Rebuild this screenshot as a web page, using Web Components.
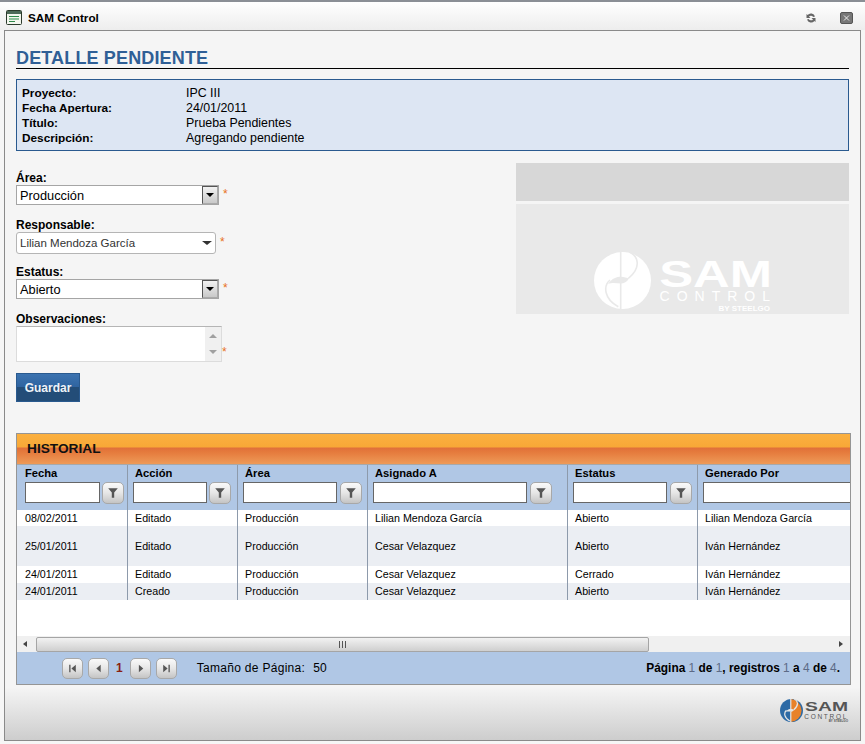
<!DOCTYPE html>
<html>
<head>
<meta charset="utf-8">
<title>SAM Control</title>
<style>
  html, body { margin: 0; padding: 0; background: #f5f5f5; }
  body { font-family: "Liberation Sans", Arial, sans-serif; font-size: 12px; color: #000; }
</style>
</head>
<body>
<sam-window>
  <sam-detail>
    <sam-title>DETALLE PENDIENTE</sam-title>
    <sam-info></sam-info>
    <div style="display:flex;justify-content:space-between;margin-top:12px">
      <sam-form></sam-form>
      <sam-banner></sam-banner>
    </div>
    <sam-grid></sam-grid>
  </sam-detail>
</sam-window>

<script>
// Logo mark shared by the banner and the footer (viewBox is 57x57)
function logoMark(left, right, cut, sw) {
  return `
    <circle cx="28.5" cy="28.5" r="28.5" fill="${left}"/>
    <path d="M26.700 .06A28.500 28.500 0 0 1 26.700 56.940Z" fill="${right}"/>
    <path d="M14 32C18 26 23 24.700 27 24.700C30 24.700 33 26 35 26.500C33 30 30 31.500 27 31.500C23 31.500 19 30 14 32Z" fill="${cut}"/>
    <path d="M26.700 0V25M26.700 31V57M35.300 0C44 4 48 15 34.300 26.500M16 28C9 34 10 47 24.300 54.700" fill="none" stroke="${cut}" stroke-width="${sw}"/>`;
}

class SamWindow extends HTMLElement {
  constructor() {
    super();
    this.attachShadow({mode: "open"});
    this.shadowRoot.innerHTML = `
      <style>
        :host { display: block; width: 865px; height: 744px; box-sizing: border-box; background: #f6f6f6; border-top: 2px solid #8b8f96; overflow: hidden; }
        #bar { height: 28px; box-sizing: border-box; display: flex; align-items: center; padding: 3px 12px 0 6px; background: linear-gradient(#ffffff, #ededed); }
        #name { font-weight: bold; font-size: 11.700px; margin-left: 6px; flex: 1; }
        #refresh { margin-right: 23px; }
        #frame { margin-left: 4px; width: 857px; height: 711px; box-sizing: border-box; border: 1px solid #8a8a8a; background: #f5f5f5; display: flex; flex-direction: column; }
        #body { flex: 1; min-height: 0; }
        #foot { height: 55px; flex: none; display: flex; justify-content: flex-end; padding: 14px 12px 0 0; box-sizing: border-box; background: linear-gradient(#f5f5f5 4%, #cdcdcd); }
      </style>
      <div id="bar">
        <svg width="16" height="15" viewBox="0 0 16 15">
          <rect x=".5" y=".5" width="15" height="14" rx="1" fill="#f3f6ee" stroke="#2c3a2c"/>
          <rect x="1" y="1" width="14" height="3" fill="#4d6a58"/>
          <path d="M3 6.500h10M3 9h10M3 11.500h6" stroke="#2f8a4a" fill="none"/>
        </svg>
        <span id="name">SAM Control</span>
        <svg id="refresh" width="12" height="12" viewBox="0 0 12 12">
          <path d="M10 4.500A4.300 4.300 0 0 0 2.600 3L1.500 2v4h4L4 4.600A2.600 2.600 0 0 1 8.300 5Z" fill="#666"/>
          <path d="M2 7.500A4.300 4.300 0 0 0 9.400 9l1.100 1V6h-4L8 7.400A2.600 2.600 0 0 1 3.700 7Z" fill="#666"/>
        </svg>
        <svg width="13" height="12" viewBox="0 0 13 12">
          <rect x=".5" y=".5" width="12" height="11" rx="1.500" fill="#777" stroke="#555"/>
          <path d="M4 3.500l5 5M9 3.500l-5 5" stroke="#eee" fill="none"/>
        </svg>
      </div>
      <div id="frame">
        <div id="body"><slot></slot></div>
        <div id="foot"><sam-logo small></sam-logo></div>
      </div>`;
  }
}

class SamDetail extends HTMLElement {
  constructor() {
    super();
    this.attachShadow({mode: "open"});
    this.shadowRoot.innerHTML = `
      <style>:host { display: block; padding: 17px 11px 0 11px; }</style>
      <slot></slot>`;
  }
}

class SamTitle extends HTMLElement {
  constructor() {
    super();
    this.attachShadow({mode: "open"});
    this.shadowRoot.innerHTML = `
      <style>
        :host { display: block; height: 20px; border-bottom: 1px solid #000; font: bold 18px/20px "Liberation Sans", Arial, sans-serif; color: #2f5f96; letter-spacing: .15px; }
      </style>
      <slot></slot>`;
  }
}

class SamInfo extends HTMLElement {
  constructor() {
    super();
    this.attachShadow({mode: "open"});
    var rows = [
      ["Proyecto:", "IPC III"],
      ["Fecha Apertura:", "24/01/2011"],
      ["Título:", "Prueba Pendientes"],
      ["Descripción:", "Agregando pendiente"]
    ];
    this.shadowRoot.innerHTML = `
      <style>
        :host { display: grid; grid-template-columns: 164px 1fr; grid-auto-rows: 15px; margin-top: 10px; height: 72px; box-sizing: border-box; padding: 6px 5px 4px; border: 1px solid #2a5a8f; background: #dde6f3; font-size: 12.400px; line-height: 15px; }
        b { font-weight: bold; font-size: 11.800px; }
      </style>
      ${rows.map(r => `<b>${r[0]}</b><span>${r[1]}</span>`).join("")}`;
  }
}

class SamField extends HTMLElement {
  constructor() {
    super();
    this.attachShadow({mode: "open"});
    this.shadowRoot.innerHTML = `
      <style>
        :host { display: block; }
        label { display: block; font-weight: bold; font-size: 12px; line-height: 14px; height: 14px; }
        #row { display: flex; align-items: center; }
        #star { color: #e8701a; font-size: 12px; margin-left: 4px; margin-bottom: 2px; line-height: 12px; }
        :host([low]) #star { margin-left: 0; align-self: flex-end; margin-bottom: 4px; }
      </style>
      <label>${this.getAttribute("label")}</label>
      <div id="row"><slot></slot><span id="star">*</span></div>`;
  }
}

class SamSelect extends HTMLElement {
  constructor() {
    super();
    this.attachShadow({mode: "open"});
    this.shadowRoot.innerHTML = `
      <style>
        :host { display: flex; width: 203px; height: 20px; box-sizing: border-box; border: 1px solid #a5a5a5; background: #fff; font-size: 12.800px; align-items: center; }
        span { flex: 1; padding-left: 3px; }
        i { width: 16px; height: 18px; box-sizing: border-box; border: 1px solid #555; border-right-color: #aaa; border-bottom-color: #aaa; background: linear-gradient(#f2f2f2, #c9c9c9); display: flex; align-items: center; justify-content: center; }
        i:after { content: ""; border: 4px solid transparent; border-top: 4px solid #000; border-bottom: 0; }
      </style>
      <span><slot></slot></span><i></i>`;
  }
}

class SamCombo extends HTMLElement {
  constructor() {
    super();
    this.attachShadow({mode: "open"});
    this.shadowRoot.innerHTML = `
      <style>
        :host { display: flex; width: 200px; height: 22px; box-sizing: border-box; border: 1px solid #b5b5b5; border-radius: 3px; background: #fff; font-size: 11.500px; align-items: center; color: #333; }
        span { flex: 1; padding-left: 3px; }
        i { width: 0; border: 4px solid transparent; border-width: 4px 5px 0; border-top-color: #333; margin-right: 3px; }
      </style>
      <span><slot></slot></span><i></i>`;
  }
}

class SamTextarea extends HTMLElement {
  constructor() {
    super();
    this.attachShadow({mode: "open"});
    this.shadowRoot.innerHTML = `
      <style>
        :host { display: flex; width: 206px; height: 36px; box-sizing: border-box; border: 1px solid #dcdcdc; border-top-color: #b5b5b5; background: #fff; }
        #track { margin-left: auto; width: 16px; background: #f0f0f0; display: flex; flex-direction: column; justify-content: space-between; align-items: center; padding: 7px 0; box-sizing: border-box; }
        i { border: 4px solid transparent; border-width: 0 4px 4px; border-bottom-color: #a0a0a0; }
        i.d { border-width: 4px 4px 0; border-top-color: #a0a0a0; }
      </style>
      <div id="track"><i></i><i class="d"></i></div>`;
  }
}

class SamForm extends HTMLElement {
  constructor() {
    super();
    this.attachShadow({mode: "open"});
    this.shadowRoot.innerHTML = `
      <style>
        :host { display: flex; flex-direction: column; align-items: flex-start; padding-top: 8px; }
        button { margin-top: 11px; width: 64px; height: 29px; border: 1px solid #2a5a8f; padding: 0; color: #eef3f8; font: bold 12px "Liberation Sans", Arial, sans-serif; background: linear-gradient(#3c73b0, #2f64a0 47%, #234d78 48%, #234d78); }
      </style>
      <sam-field label="Área:"><sam-select>Producción</sam-select></sam-field>
      <sam-field label="Responsable:" style="margin-top:13px"><sam-combo>Lilian Mendoza García</sam-combo></sam-field>
      <sam-field label="Estatus:" style="margin-top:11px"><sam-select>Abierto</sam-select></sam-field>
      <sam-field label="Observaciones:" low style="margin-top:13px"><sam-textarea></sam-textarea></sam-field>
      <button>Guardar</button>`;
  }
}

class SamLogo extends HTMLElement {
  constructor() {
    super();
    this.attachShadow({mode: "open"});
    var small = this.hasAttribute("small");
    var c = small
      ? {l: "#2d6aa5", r: "#e8822a", cut: "#e6e6e6", text: "#555", sw: 3}
      : {l: "#fff", r: "#fff", cut: "#e9e9e9", text: "#fff", sw: 1.6};
    this.shadowRoot.innerHTML = `
      <style>
        :host { display: flex; align-items: flex-start; }
        svg { flex: none; }
        #text { display: flex; flex-direction: column; align-items: flex-end; font-family: "Liberation Sans", Arial, sans-serif; color: ${c.text}; margin-left: ${small ? 2 : 8}px; padding-top: ${small ? 3 : 10}px; width: ${small ? 43 : 111}px; white-space: nowrap; }
        #sam { font-weight: bold; font-size: ${small ? 13.5 : 36}px; line-height: ${small ? 10 : 26}px; transform: scaleX(${small ? 1.43 : 1.41}); transform-origin: right; margin-right: ${small ? 0 : -2}px; }
        #control { font-size: ${small ? 6.5 : 14}px; line-height: ${small ? 6 : 14}px; letter-spacing: ${small ? 1.7 : 7}px; margin-top: ${small ? 2 : 1}px; margin-right: ${small ? 0 : -7}px; }
        #by { font-weight: bold; font-size: ${small ? 3 : 8}px; line-height: ${small ? 3 : 8}px; margin-top: ${small ? 0 : 2}px; }
      </style>
      <svg width="${small ? 23 : 57}" height="${small ? 23 : 57}" viewBox="0 0 57 57">${logoMark(c.l, c.r, c.cut, c.sw)}</svg>
      <div id="text"><div id="sam">SAM</div><div id="control">CONTROL</div><div id="by">BY STEELGO</div></div>`;
  }
}

class SamBanner extends HTMLElement {
  constructor() {
    super();
    this.attachShadow({mode: "open"});
    this.shadowRoot.innerHTML = `
      <style>
        :host { display: block; width: 333px; }
        #top { height: 38px; background: #d7d7d7; }
        #main { margin-top: 3px; height: 110px; background: #e9e9e9; box-sizing: border-box; padding: 48px 0 0 78px; overflow: hidden; }
      </style>
      <div id="top"></div>
      <div id="main"><sam-logo></sam-logo></div>`;
  }
}

class SamIconButton extends HTMLElement {
  constructor() {
    super();
    this.attachShadow({mode: "open"});
    var icons = {
      filter: `<path d="M1 1h8L6 4.500V9H4V4.500Z" fill="#555"/>`,
      first: `<path d="M2 1.500h1.200v7H2ZM8 1.500v7L4 5Z" fill="#555"/>`,
      prev: `<path d="M7 1.500v7L3 5Z" fill="#555"/>`,
      next: `<path d="M3.500 1.500v7l4-3.500Z" fill="#555"/>`,
      last: `<path d="M2 1.500v7L6 5ZM6.800 1.500H8v7H6.800Z" fill="#555"/>`
    };
    var size = this.getAttribute("icon") == "filter" ? 12 : 11;
    this.shadowRoot.innerHTML = `
      <style>
        :host { display: flex; width: 21px; height: 21px; box-sizing: border-box; border: 1px solid #a8a8a8; border-radius: 5px; background: linear-gradient(#fafafa, #e6e6e6 50%, #c4c4c4); align-items: center; justify-content: center; flex: none; }
        :host([icon=filter]) { width: 22px; height: 22px; }
      </style>
      <svg width="${size}" height="${size}" viewBox="0 0 10 10">${icons[this.getAttribute("icon")]}</svg>`;
  }
}

class SamGrid extends HTMLElement {
  constructor() {
    super();
    this.attachShadow({mode: "open"});
    var cols = [
      {name: "Fecha", w: 111, input: 75, gap: 2},
      {name: "Acción", w: 110, input: 74, gap: 2},
      {name: "Área", w: 130, input: 94, gap: 3},
      {name: "Asignado A", w: 200, input: 154, gap: 3},
      {name: "Estatus", w: 130, input: 94, gap: 3},
      {name: "Generado Por", w: 200, input: 200, nofilter: true}
    ];
    var rows = [
      {h: 16, c: ["08/02/2011", "Editado", "Producción", "Lilian Mendoza García", "Abierto", "Lilian Mendoza García"]},
      {h: 40, alt: true, c: ["25/01/2011", "Editado", "Producción", "Cesar Velazquez", "Abierto", "Iván Hernández"]},
      {h: 17, up: true, c: ["24/01/2011", "Editado", "Producción", "Cesar Velazquez", "Cerrado", "Iván Hernández"]},
      {h: 17, up: true, alt: true, c: ["24/01/2011", "Creado", "Producción", "Cesar Velazquez", "Abierto", "Iván Hernández"]}
    ];
    var template = cols.map(c => c.w + "px").join(" ");
    this.shadowRoot.innerHTML = `
      <style>
        :host { margin-top: 31px; width: 835px; height: 252px; box-sizing: border-box; border: 1px solid #959595; font-size: 10.700px; display: flex; flex-direction: column; }
        #head { height: 31px; flex: none; box-sizing: border-box; padding: 7px 0 0 10px; border-bottom: 1px solid #a8a8a8; font: bold 13.700px/15px "Liberation Sans", Arial, sans-serif; color: #111; background: linear-gradient(#fbb040, #f8a837 44%, #e0703a 46%, #e57a3c 60%, #ee9a58); }
        #scroll { flex: 1; min-height: 0; overflow: hidden; background: #fff; }
        .row { display: grid; grid-template-columns: ${template}; width: 881px; }
        #cols { background: #b0c7e5; height: 45px; font-weight: bold; font-size: 11.200px; }
        #cols > div { border-right: 1px solid #8d9aab; padding: 2px 0 0 7px; box-sizing: border-box; overflow: hidden; }
        #cols > div:first-child { padding-left: 8px; }
        #cols .f { display: flex; align-items: flex-start; margin: 3px 0 0 -2px; }
        #cols > div:first-child .f { margin-left: 0; }
        #cols input { height: 21px; padding: 0; box-sizing: border-box; border: 1px solid #666; background: #fff; flex: none; margin: 0; }
        .body > div { border-right: 1px solid #8d9aab; padding-left: 7px; box-sizing: border-box; display: flex; align-items: center; }
        .body > div:first-child { padding-left: 8px; }
        .up > div { padding-bottom: 2px; }
        .alt { background: #ebeef3; }
        #bar { height: 16px; flex: none; display: flex; align-items: center; background: #f0f0f0; }
        #bar i { width: 0; border: 3px solid transparent; margin: 0 5px 0 0; }
        #thumb { width: 613px; height: 15px; box-sizing: border-box; border: 1px solid #a5a5a5; border-radius: 2px; background: linear-gradient(#f2f2f2, #cfcfcf); display: flex; align-items: center; justify-content: center; }
        #pager { height: 32px; flex: none; box-sizing: border-box; background: #b0c7e5; display: flex; align-items: center; padding: 0 10px 0 45px; gap: 5px; font-size: 12px; }
        #cur { color: #8a1f10; font-weight: bold; margin: 0 2px; }
        #size { margin-left: 15px; letter-spacing: .3px; }
        #val { margin-left: 3px; }
        #info { margin-left: auto; font-weight: bold; font-size: 11.900px; }
        #info span { color: #5c6a86; font-weight: normal; }
      </style>
      <div id="head">HISTORIAL</div>
      <div id="scroll">
        <div class="row" id="cols">
          ${cols.map(c => `<div>${c.name}<div class="f" style="gap:${c.gap || 0}px"><input style="width:${c.input}px">${c.nofilter ? "" : `<sam-icon-button icon="filter"></sam-icon-button>`}</div></div>`).join("")}
        </div>
        ${rows.map(r => `<div class="row body ${r.alt ? "alt" : ""} ${r.up ? "up" : ""}" style="height:${r.h}px">${r.c.map(t => `<div>${t}</div>`).join("")}</div>`).join("")}
      </div>
      <div id="bar">
        <i style="border-right:4px solid #444;margin-left:3px;margin-right:9px"></i>
        <div id="thumb"><svg width="7" height="7" viewBox="0 0 7 7"><path d="M.5 0v7M3.500 0v7M6.500 0v7" stroke="#555"/></svg></div>
        <i style="border-left:4px solid #444;margin-left:auto;margin-right:4px"></i>
      </div>
      <div id="pager">
        <sam-icon-button icon="first"></sam-icon-button>
        <sam-icon-button icon="prev"></sam-icon-button>
        <span id="cur">1</span>
        <sam-icon-button icon="next"></sam-icon-button>
        <sam-icon-button icon="last"></sam-icon-button>
        <span id="size">Tamaño de Página:</span>
        <span id="val">50</span>
        <div id="info">Página <span>1</span> de <span>1</span>, registros <span>1</span> a <span>4</span> de <span>4</span>.</div>
      </div>`;
  }
}

customElements.define("sam-window", SamWindow);
customElements.define("sam-detail", SamDetail);
customElements.define("sam-title", SamTitle);
customElements.define("sam-info", SamInfo);
customElements.define("sam-field", SamField);
customElements.define("sam-select", SamSelect);
customElements.define("sam-combo", SamCombo);
customElements.define("sam-textarea", SamTextarea);
customElements.define("sam-form", SamForm);
customElements.define("sam-logo", SamLogo);
customElements.define("sam-banner", SamBanner);
customElements.define("sam-icon-button", SamIconButton);
customElements.define("sam-grid", SamGrid);
</script>
</body>
</html>
